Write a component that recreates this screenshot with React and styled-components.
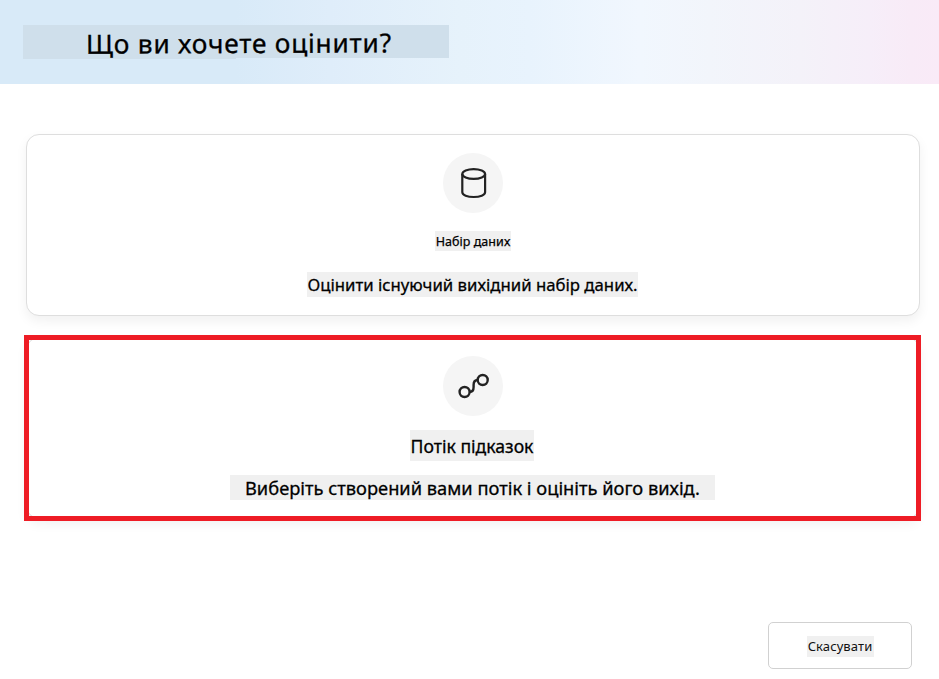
import React from "react";
import styled, { createGlobalStyle } from "styled-components";

const GlobalStyle = createGlobalStyle`
  *, *::before, *::after { box-sizing: border-box; }
  body {
    margin: 0;
    background: #fff;
    color: #000;
    font-family: "Noto Sans", "Open Sans", sans-serif;
  }
`;

const Page = styled.main`
  display: flex;
  flex-direction: column;
  width: 939px;
  height: 679px;
  overflow: hidden;
`;

const Header = styled.header`
  height: 84px;
  flex: none;
  padding: 25px 0 0 23px;
  background: linear-gradient(
    90deg,
    #d8eaf8 0,
    #d8eaf8 235px,
    #dfedfa 330px,
    #e6f2fb 460px,
    #e8f3fd 530px,
    #f1f7fe 640px,
    #f2f5fb 710px,
    #f4f2f9 800px,
    #f6eef9 870px,
    #f8ebf7 910px,
    #f9eaf7 939px
  );
`;

const Title = styled.h1`
  width: 426px;
  height: 34px;
  margin: 0;
  padding-left: 63px;
  background: #cfdfeb;
  clip-path: polygon(0 0, 100% 0, 100% 33px, 213px 33px, 213px 34px, 0 34px);
  font-size: 26.3px;
  font-weight: 400;
  letter-spacing: 0.77px;
  line-height: 37px;
  white-space: nowrap;
  -webkit-text-stroke: 0.3px #000;
`;

const TitleText = styled.span`
  display: inline-block;
  transform: rotate(-0.25deg);
`;

const Options = styled.section`
  display: flex;
  flex-direction: column;
  gap: 21px;
  padding: 50px 19px 0 26px;
`;

const Card = styled.article`
  position: relative;
  display: flex;
  flex-direction: column;
  align-items: center;
  height: 182px;
  padding-top: 18px;
  border: 1px solid #dedede;
  border-radius: 13px;
  background: #fff;
  box-shadow: 0 5px 12px rgba(0, 0, 0, 0.06);
`;

const HighlightFrame = styled.div`
  position: absolute;
  inset: -3px -2px -3px -3px;
  border: 5px solid #ee1c25;
`;

const IconDisc = styled.div`
  display: grid;
  place-items: center;
  width: 60px;
  height: 60px;
  flex: none;
  border-radius: 50%;
  background: #f5f5f5;
`;

const Label = styled.span`
  display: block;
  flex: none;
  width: ${(p) => p.$width}px;
  height: ${(p) => p.$height}px;
  margin-top: ${(p) => p.$gap || 0}px;
  margin-right: ${(p) => p.$nudge || 0}px;
  background: #f0f0f0;
  font-size: ${(p) => p.$size}px;
  font-weight: 400;
  letter-spacing: ${(p) => p.$tracking || 0}px;
  line-height: ${(p) => p.$line || p.$height}px;
  text-align: center;
  white-space: nowrap;
  -webkit-text-stroke: ${(p) => p.$stroke || 0}px #000;
`;

const Footer = styled.footer`
  display: flex;
  justify-content: flex-end;
  margin-top: 103px;
  padding-right: 27px;
`;

const CancelButton = styled.button`
  display: flex;
  justify-content: center;
  align-items: flex-start;
  width: 144px;
  height: 47px;
  padding: 13px 0 0;
  border: 1px solid #d1d1d1;
  border-radius: 5px;
  background: #fff;
  color: #111;
  font-family: inherit;
`;

const DatabaseIcon = () => (
  <svg width="60" height="60" fill="none" stroke="#222" strokeWidth="2.2">
    <ellipse cx="30.7" cy="21" rx="11.4" ry="4.9" />
    <path d="M19.3 21V39.3C19.3 42.1 24.4 44 30.7 44S42.1 42.1 42.1 39.3V21" />
  </svg>
);

const FlowIcon = () => (
  <svg width="60" height="60" fill="none" stroke="#222" strokeWidth="2.4">
    <circle cx="21.6" cy="36" r="5" />
    <circle cx="39.7" cy="24" r="5" />
    <path d="M26.6 36C29.9 36 30.6 34.2 30.6 31V29C30.6 25.8 31.4 24 34.7 24" />
  </svg>
);

export default function App() {
  return (
    <Page>
      <GlobalStyle />
      <Header>
        <Title>
          <TitleText>Що ви хочете оцінити?</TitleText>
        </Title>
      </Header>
      <Options>
        <Card>
          <IconDisc>
            <DatabaseIcon />
          </IconDisc>
          <Label $width={76} $height={20} $gap={18} $size={12.5} $line={21} $tracking={0.05} $stroke={0.25}>
            Набір даних
          </Label>
          <Label $width={331} $height={25} $gap={21} $size={16.75} $nudge={1} $stroke={0.28}>
            Оцінити існуючий вихідний набір даних.
          </Label>
        </Card>
        <Card>
          <IconDisc>
            <FlowIcon />
          </IconDisc>
          <Label $width={124} $height={31} $gap={14} $size={17.6} $line={32} $nudge={2} $stroke={0.28}>
            Потік підказок
          </Label>
          <Label $width={485} $height={25} $gap={14} $size={18.3} $line={25} $nudge={1} $stroke={0.28}>
            Виберіть створений вами потік і оцініть його вихід.
          </Label>
          <HighlightFrame />
        </Card>
      </Options>
      <Footer>
        <CancelButton type="button">
          <Label $width={67} $height={21} $size={13} $tracking={0.1}>
            Скасувати
          </Label>
        </CancelButton>
      </Footer>
    </Page>
  );
}
